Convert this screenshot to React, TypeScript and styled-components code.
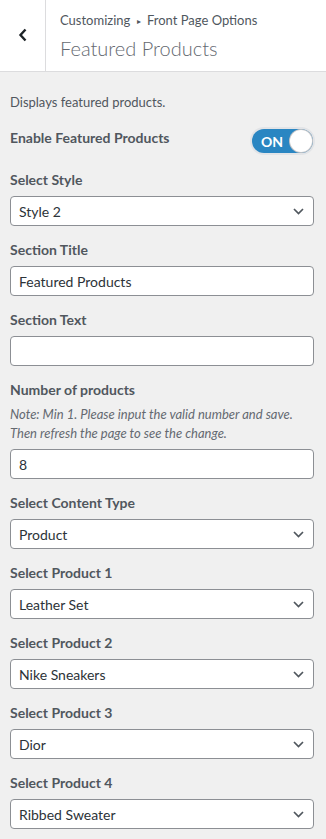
import styled, { createGlobalStyle } from 'styled-components'

const GlobalStyle = createGlobalStyle`
    html, body {
        margin: 0;
        padding: 0;
        background: #f0f0f0;
    }
    body {
        font-family: Lato, "Noto Sans", sans-serif;
        color: #50575e;
    }
    * {
        box-sizing: border-box;
    }
`

type Field = {
    label: string
    kind: 'select' | 'text'
    value: string
    note?: string
}

const fields: Field[] = [
    { label: 'Select Style', kind: 'select', value: 'Style 2' },
    { label: 'Section Title', kind: 'text', value: 'Featured Products' },
    { label: 'Section Text', kind: 'text', value: '' },
    {
        label: 'Number of products',
        kind: 'text',
        value: '8',
        note: 'Note: Min 1. Please input the valid number and save. Then refresh the page to see the change.',
    },
    { label: 'Select Content Type', kind: 'select', value: 'Product' },
    { label: 'Select Product 1', kind: 'select', value: 'Leather Set' },
    { label: 'Select Product 2', kind: 'select', value: 'Nike Sneakers' },
    { label: 'Select Product 3', kind: 'select', value: 'Dior' },
    { label: 'Select Product 4', kind: 'select', value: 'Ribbed Sweater' },
]

const Chevron = () => (
    <svg width="11" height="7" viewBox="0 0 11 7" fill="none">
        <path d="M1 1 L5.5 5.5 L10 1" stroke="#50575e" strokeWidth="1.7" />
    </svg>
)

const BackIcon = () => (
    <svg width="10" height="14" viewBox="0 0 10 14" fill="none">
        <path d="M7.5 1.5 L2.5 7 L7.5 12.5" stroke="#1d2327" strokeWidth="2.4" />
    </svg>
)

export default function App() {
    return (
        <Panel>
            <GlobalStyle />
            <Header>
                <BackButton>
                    <BackIcon />
                </BackButton>
                <Titles>
                    <Crumb>
                        Customizing <Arrow>▸</Arrow> Front Page Options
                    </Crumb>
                    <Title>Featured Products</Title>
                </Titles>
            </Header>
            <Body>
                <Description>Displays featured products.</Description>
                <ToggleRow>
                    <Label as="span">Enable Featured Products</Label>
                    <Toggle>
                        <ToggleText>ON</ToggleText>
                        <Knob />
                    </Toggle>
                </ToggleRow>
                {fields.map((f) => (
                    <Control key={f.label}>
                        <Label>{f.label}</Label>
                        {f.note && <Note>{f.note}</Note>}
                        {f.kind === 'select' ? (
                            <SelectBox>
                                <span>{f.value}</span>
                                <Chevron />
                            </SelectBox>
                        ) : (
                            <TextBox>{f.value}</TextBox>
                        )}
                    </Control>
                ))}
            </Body>
        </Panel>
    )
}

const Panel = styled.div`
    width: 326px;
    min-height: 839px;
    background: #f0f0f0;
`

const Header = styled.div`
    display: flex;
    height: 72px;
    background: #fff;
    border-bottom: 1px solid #dcdcde;
`

const BackButton = styled.div`
    width: 46px;
    display: flex;
    align-items: center;
    justify-content: center;
    border-right: 1px solid #dcdcde;
    padding-bottom: 2px;
`

const Titles = styled.div`
    display: flex;
    flex-direction: column;
    padding: 10px 0 0 14px;
`

const Crumb = styled.div`
    font-size: 13px;
    line-height: 20px;
    color: #50575e;
`

const Arrow = styled.span`
    font-size: 8px;
    margin: 0 3px;
    vertical-align: 1px;
`

const Title = styled.div`
    font-size: 20px;
    line-height: 28px;
    font-weight: 300;
    color: #646970;
    margin-top: 3px;
`

const Body = styled.div`
    padding: 20px 12px 20px 10px;
    display: flex;
    flex-direction: column;
`

const Description = styled.div`
    font-size: 13px;
    line-height: 20px;
    color: #50575e;
    margin-bottom: 16px;
`

const ToggleRow = styled.div`
    display: flex;
    align-items: center;
    justify-content: space-between;
    margin-bottom: 16px;
`

const Label = styled.div`
    font-size: 14px;
    line-height: 20px;
    font-weight: 700;
    color: #50575e;
    margin-bottom: 6px;
`

const Toggle = styled.div`
    width: 61px;
    height: 24px;
    margin-right: 1px;
    border-radius: 12px;
    background: #2a86c2;
    box-shadow: 0 0 0 2px #e2e4e7;
    display: flex;
    align-items: center;
    justify-content: space-between;
    padding: 0 1px 0 9px;
`

const ToggleText = styled.span`
    color: #fff;
    font-size: 14px;
    font-weight: 700;
`

const Knob = styled.span`
    width: 22px;
    height: 22px;
    border-radius: 50%;
    background: #fff;
    box-shadow: 0 0 0 1px #c3c4c7;
`

const Control = styled.div`
    display: flex;
    flex-direction: column;
    margin-bottom: 14px;
`

const Note = styled.div`
    font-size: 13px;
    line-height: 19px;
    font-style: italic;
    color: #646970;
    margin: -1px 0 6px;
`

const Field = styled.div`
    height: 30px;
    background: #fff;
    border: 1px solid #8c8f94;
    border-radius: 4px;
    font-size: 14px;
    color: #2c3338;
    display: flex;
    align-items: center;
    padding: 0 8px;
`

const SelectBox = styled(Field)`
    justify-content: space-between;
    padding-right: 9px;
`

const TextBox = styled(Field)``
